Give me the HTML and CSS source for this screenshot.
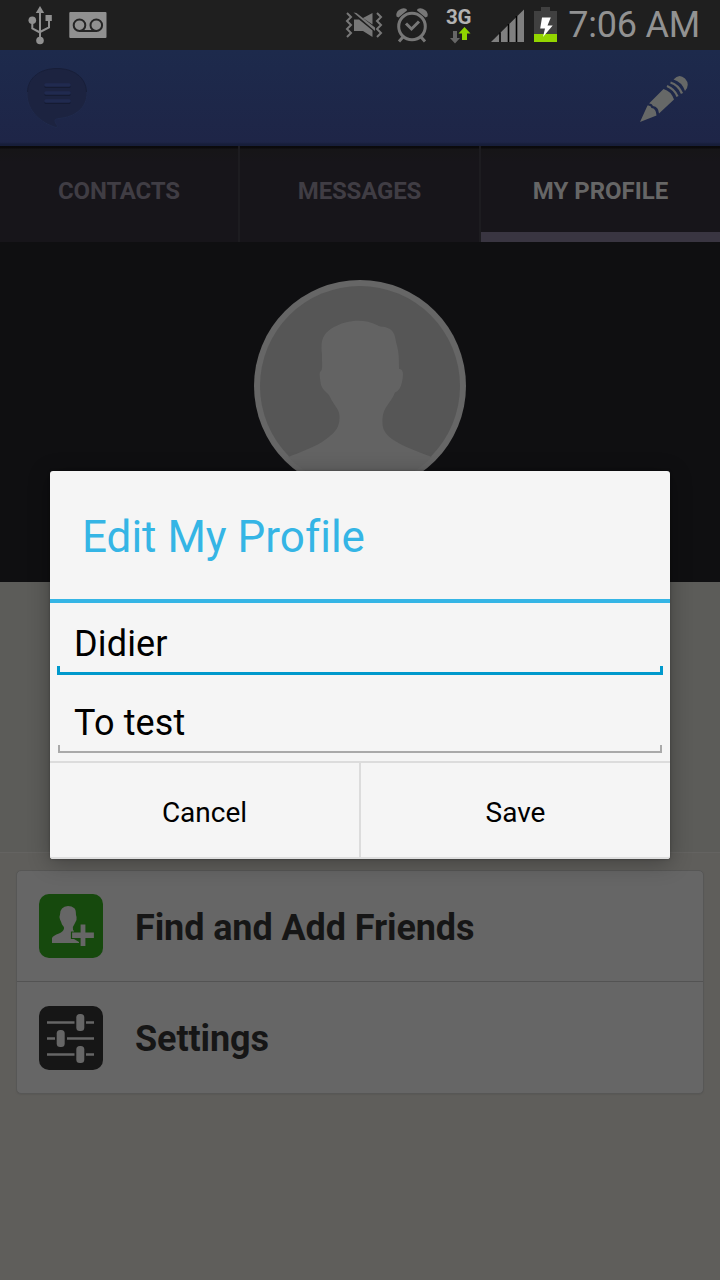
FILE: index.html
```html
<!DOCTYPE html>
<html lang="en">
<head>
<meta charset="utf-8">
<title>My Profile</title>
<link rel="stylesheet" href="styles.css">
</head>
<body>
<div class="screen">
  <header class="status">
    <svg class="status-icons" width="560" height="50" viewBox="0 0 560 50">
      <g fill="none" stroke="#909090" stroke-width="2">
        <path d="M40 11V40M32.300 20v8.500L40 32.500M49 18v9.500L40 32"/>
      </g>
      <g fill="#909090">
        <path d="M40 6l4.200 7h-8.400z"/><circle cx="32.300" cy="20.300" r="3.800"/><rect x="45.500" y="15" width="6.300" height="6"/><circle cx="40" cy="40.500" r="3.800"/>
        <rect x="69.300" y="12" width="37.200" height="26" rx="1"/>
      </g>
      <g fill="none" stroke="#242424" stroke-width="2"><circle cx="79.500" cy="25.200" r="5.800"/><circle cx="96.300" cy="25.200" r="5.800"/><path d="M79 31h18"/></g>
      <g fill="none" stroke="#777" stroke-width="2">
        <path d="M347 13l4 4-4 4 4 4-4 4 4 4-4 4M377 13l4 4-4 4 4 4-4 4 4 4-4 4"/>
      </g>
      <g fill="#777"><path d="M363 18l9.500-5v11.500zM354 19.500l5 0 13.500 11V37l-9.500-6h-9zM353.500 12.500l3 .500 18.500 14.500v3.500z"/></g>
      <g fill="none" stroke="#777" stroke-width="3">
        <circle cx="412" cy="26.500" r="13.300"/><path d="M406 23.500l5.500 5.500 7.500-7.500M403 37l-4 4.500M421 37l4 4.500"/>
      </g>
      <g fill="#777"><path d="M396.500 16.500q-1-4 2.500-6.500 4-3 7.500-1l.5 1.500-8.500 7zM427.500 16.500q1-4-2.500-6.500-4-3-7.500-1l-.5 1.500 8.500 7z"/></g>
      <path d="M453 31h4v7h3l-5 5.500-5-5.500h3z" fill="#666"/><path d="M464.500 27l6 6.500H467V40h-5v-6.500h-3.500z" fill="#8fd400"/>
      <path d="M491 42L524 9.500V42z" fill="#808080"/><path d="M500 32.500V42M508.500 24V42M516.500 16V42" stroke="#000" stroke-width="1.600"/>
      <path d="M534 11h7V7h9v4h7v31h-23z" fill="#404040"/><path d="M534 34h23v8h-23z" fill="#93d500"/>
      <path d="M542 17.500h8.800L547.500 25.500h5.200L543 37l2-8.500h-4.800z" fill="#fff"/>
    </svg>
    <span class="network">3G</span>
    <span class="clock">7:06 AM</span>
  </header>

  <div class="action-bar">
    <svg class="chat" width="64" height="64" viewBox="0 0 64 64">
      <path d="M32 3C15 3 2 14 2 29c0 17 14 29 29 33.500 2 0 1.500-2 .500-3-3-5-1.500-5.500 2.500-6C50 52 62 43 62 28 62 13 49 3 32 3z" fill="#1c2340" stroke="#202a4c" stroke-width="1"/>
      <path d="M2.500 27C3 12 16 3.500 32 3.500S61 12 61.500 27" fill="none" stroke="#171e38"/>
      <path d="M21 21.500h23M21 29.500h23M21 37.500h23" stroke="#151b32" stroke-width="3" stroke-linecap="round"/>
      <path d="M21 20h23M21 28h23M21 36h23" stroke="#202a4f" stroke-width="3.400" stroke-linecap="round"/>
    </svg>
    <svg class="pencil" width="54" height="54" viewBox="0 0 54 54">
      <path d="M4 50L11.500 33.500q3.500-.500 4 2.500 4.500 0 5 7.500z" fill="#666867"/>
      <path d="M13 31.500L27.500 17q7.500 2 10.500 10.500L23 41.500q-.500-7-6-7.500-1-3-4-2.500z" fill="#666867"/>
      <path d="M37.500 7.500Q43 1 49 6.500q5.500 6 0 12.500Q46 10 37.500 7.500z" fill="#666867"/>
      <path d="M34.500 10.500q8 2.500 11.500 11M31 14q7.500 3 10.500 10.500" fill="none" stroke="#666867" stroke-width="2.300"/>
    </svg>
  </div>

  <nav class="tabs">
    <div class="tab"><span>CONTACTS</span></div>
    <div class="tab"><span>MESSAGES</span></div>
    <div class="tab active"><span>MY PROFILE</span></div>
  </nav>

  <section class="hero">
    <svg width="212" height="212" viewBox="0 0 212 212">
      <defs><clipPath id="disc"><circle cx="106" cy="106" r="101"/></clipPath></defs>
      <circle cx="106" cy="106" r="106" fill="#666"/><circle cx="106" cy="106" r="100" fill="#565656"/>
      <path clip-path="url(#disc)" d="M68 75C66 58 70 53 80 47 92 40 110 38 123 45 125 47 128 46.500 131 47 139 49 141 54 142 62 145 72 145 77 145 89 149 88 150 94 148 102 147 107 145 111 141 112.500 137 123 129 127 128.500 139 128 148 130 153 138 159 149 167 166 172 180 178V212H32V178C46 172 62 167 71.500 159.500 79 154 85.500 149 85.500 138 86 129 80 126 76 117 75 113.500 69 111 67 105 66.500 101 65 95 66 92 69 90 68 84 68 80 68 75z" fill="#636363"/>
    </svg>
  </section>

  <section class="bio"></section>

  <main class="content">
    <div class="card">
      <div class="row">
        <svg width="64" height="64" viewBox="0 0 64 64"><rect width="64" height="64" rx="10" fill="#16490d"/>
          <path d="M13 49v-5q1-2.500 7-4.500 4.500-2 5-5 0-2-2-4-1-3-2-5-1-3 0-5 0-8 8-8.500 4 0 6 2 2 1 2 7 1 2 .500 5l-2 4q-2.500 3-1.500 6l1 1v8l5 3v1z" fill="#666"/>
          <path d="M32.500 38h8.500v-8h6v8h8.500v6.500H47v8h-6v-8h-8.500z" fill="#666" stroke="#16490d" stroke-width="1.200"/></svg>
        <span>Find and Add Friends</span>
      </div>
      <div class="row">
        <svg width="64" height="64" viewBox="0 0 64 64"><rect width="64" height="64" rx="10" fill="#161616"/>
          <path d="M8 16.500h27.500M47 16.500h8M8 32.500h8M28 32.500h27M8 48.500h27.500M47 48.500h8" stroke="#666" stroke-width="2.600"/>
          <g fill="#666"><rect x="37.300" y="8" width="8" height="17" rx="3.500"/><rect x="17.700" y="24" width="8" height="17" rx="3.500"/><rect x="37.300" y="40" width="8" height="17" rx="3.500"/></g></svg>
        <span>Settings</span>
      </div>
    </div>
  </main>

  <div class="dialog">
    <h1><span>Edit My Profile</span></h1>
    <div class="fields">
      <div class="field focused"><span>Didier</span></div>
      <div class="field"><span>To test</span></div>
    </div>
    <div class="buttons"><div class="button"><span>Cancel</span></div><div class="button"><span>Save</span></div></div>
  </div>
</div>
</body>
</html>
```
FILE: styles.css
```css
* { box-sizing: border-box; }
body { margin: 0; font-family: Roboto, sans-serif; font-variant-ligatures: none; background: #5d5c58; }
.screen { position: relative; width: 720px; height: 1280px; display: flex; flex-direction: column; overflow: hidden; }
.status { position: relative; height: 50px; background: #1f1f1f; display: flex; justify-content: flex-end; padding-right: 20px; }
.status-icons { position: absolute; left: 0; top: 0; }
.network { position: absolute; left: 446px; top: 7px; font-size: 20.5px; line-height: 21px; font-weight: 700; letter-spacing: -0.3px; color: #b2b2b2; }
.clock { font-size: 36px; line-height: 51px; letter-spacing: -0.2px; color: #929292; }
.action-bar { height: 96px; display: flex; justify-content: space-between; align-items: flex-start; padding: 15px 30px 0 25px; background: linear-gradient(#1d2a4c, #1e2547 96%, #171e3a 98%); }
.pencil { margin-top: 7px; }
.tabs { height: 96px; display: grid; grid-template-columns: 240px 241px 239px; grid-template-rows: 96px; background: linear-gradient(#0a0a0b 0, #0b0a0c 2px, #161517 3px, #17151a 16px); }
.tab { display: flex; justify-content: center; border-right: 2px solid #1d1c20; font-size: 24px; line-height: 90px; letter-spacing: -0.15px; font-weight: 700; color: #403d44; }
.tab.active { border-right: 0; border-bottom: 10px solid #393541; letter-spacing: 0; color: #666; }
.hero { height: 340px; padding-top: 38px; display: flex; justify-content: center; align-items: flex-start; background: #0f0f11; }
.bio { height: 270px; background: #5c5c59; }
.content { flex: 1; padding: 17px 16px; border-top: 1px solid #646361; background: #5f5e5b; }
.card { height: 224px; border: 1px solid #575756; border-radius: 5px; background: #666; box-shadow: 0 1px 1px #5a5956; }
.row { height: 110px; padding: 0 22px; display: flex; align-items: center; gap: 32px; font-size: 36px; letter-spacing: -0.1px; font-weight: 700; color: #161616; }
.row + .row { height: 112px; border-top: 1px solid #535353; }
.row span { padding-top: 3px; }
.dialog { position: absolute; left: 50px; top: 471px; width: 620px; height: 388px; display: flex; flex-direction: column; border-radius: 3px; overflow: hidden; background: #f5f5f5; box-shadow: 0 4px 22px rgba(0,0,0,.3), 0 0 3px rgba(0,0,0,.25); }
h1 { margin: 0; height: 132px; padding-left: 32px; border-bottom: 4px solid #35b5e5; font-size: 44px; line-height: 132px; font-weight: 400; color: #35b5e5; }
.fields { height: 158px; padding: 0 8px; }
.field { position: relative; height: 78px; padding-left: 16px; font-size: 36px; line-height: 96px; letter-spacing: 0.15px; color: #000; border-bottom: 2px solid #aaa; }
.field.focused { height: 72px; margin: 0 -1px; padding-left: 17px; line-height: 82px; border-bottom: 3px solid #0099cc; }
.field::before, .field::after { content: ""; position: absolute; bottom: 0; width: 2px; height: 6px; background: #aaa; }
.field.focused::before, .field.focused::after { width: 3px; background: #0099cc; }
.field::before { left: 0; }
.field::after { right: 0; }
.buttons { display: grid; grid-template-columns: 311px 309px; height: 98px; border-top: 2px solid #dcdcdc; box-shadow: inset 0 -2px #dedede; }
.button { text-align: center; font-size: 28px; line-height: 100px; height: 96px; color: #000; }
.button:first-child { border-right: 2px solid #dcdcdc; }
```
